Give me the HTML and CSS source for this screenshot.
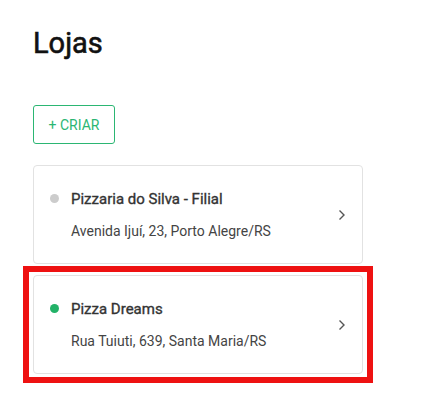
FILE: index.html
```html
<!DOCTYPE html>
<html lang="pt-BR">
<head>
<meta charset="utf-8">
<title>Lojas</title>
<link rel="stylesheet" href="styles.css">
</head>
<body>
<main class="page">
  <h1 class="title">Lojas</h1>
  <button class="btn-create">+ CRIAR</button>
  <ul class="store-list">
    <li class="store-card">
      <div class="store-info">
        <div class="store-name"><span class="dot dot-off"></span>Pizzaria do Silva - Filial</div>
        <div class="store-address">Avenida Ijuí, 23, Porto Alegre/RS</div>
      </div>
      <svg class="chevron" width="8" height="12" viewBox="0 0 8 12"><path d="M1.5 1.5 L6 6 L1.5 10.5" fill="none" stroke="#555" stroke-width="1.4"/></svg>
    </li>
    <li class="store-card is-highlighted">
      <div class="store-info">
        <div class="store-name"><span class="dot dot-on"></span>Pizza Dreams</div>
        <div class="store-address">Rua Tuiuti, 639, Santa Maria/RS</div>
      </div>
      <svg class="chevron" width="8" height="12" viewBox="0 0 8 12"><path d="M1.5 1.5 L6 6 L1.5 10.5" fill="none" stroke="#555" stroke-width="1.4"/></svg>
    </li>
  </ul>
</main>
</body>
</html>
```
FILE: styles.css
```css
* { box-sizing: border-box; }
html, body { margin: 0; padding: 0; background: #fff; min-height: 100%; }
body { font-family: Roboto, "Noto Sans", sans-serif; color: #333; min-height: 417px; }
.page { padding: 24px 0 43px 33px; width: 363px; }
.title {
  margin: 0;
  font-size: 29px;
  font-weight: 400;
  -webkit-text-stroke: 0.6px #111;
  line-height: 38px;
  color: #111;
}
.btn-create {
  display: block;
  margin-top: 43px;
  width: 82px;
  height: 39px;
  padding: 0;
  background: #fff;
  border: 1px solid #2bb673;
  border-radius: 3px;
  color: #2bb673;
  font-family: Roboto, sans-serif;
  font-size: 14px;
  letter-spacing: 0;
}
.store-list {
  list-style: none;
  margin: 21px 0 0;
  padding: 0;
  display: flex;
  flex-direction: column;
  gap: 11px;
}
.store-card {
  position: relative;
  display: flex;
  align-items: center;
  justify-content: space-between;
  height: 99px;
  padding: 0 16px 0 16px;
  border: 1px solid #e2e2e2;
  border-radius: 4px;
  background: #fff;
}
.store-card.is-highlighted::after {
  content: "";
  position: absolute;
  left: -11px;
  top: -10px;
  right: -11px;
  bottom: -10px;
  border: 6px solid #ee1111;
  pointer-events: none;
}
.store-info { display: flex; flex-direction: column; gap: 12px; }
.store-name {
  display: flex;
  align-items: center;
  gap: 12px;
  font-size: 15px;
  font-weight: 400;
  -webkit-text-stroke: 0.35px #333;
  line-height: 20px;
  color: #333;
}
.dot { width: 9px; height: 9px; border-radius: 50%; flex: none; }
.dot-off { background: #cccccc; }
.dot-on { background: #22b268; }
.store-address {
  padding-left: 21px;
  font-size: 14px;
  line-height: 20px;
  color: #444;
}
.chevron { flex: none; margin-right: 0; }
```
